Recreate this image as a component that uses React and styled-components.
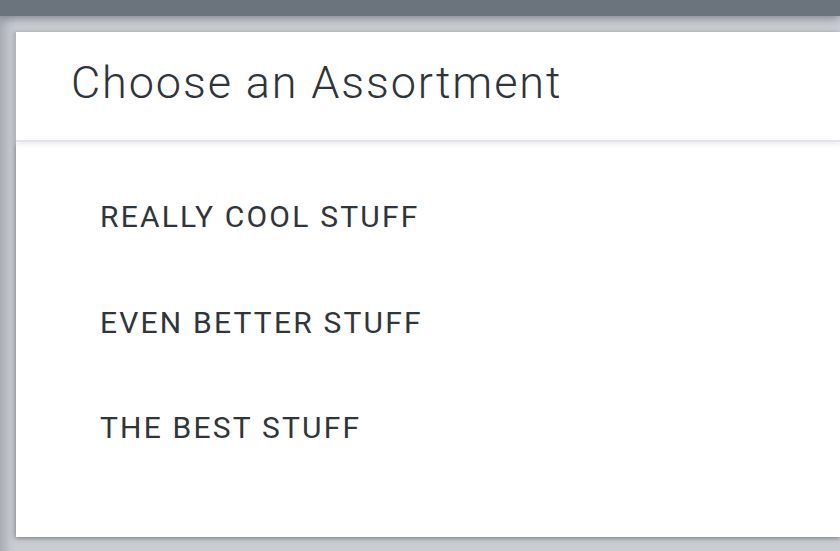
import React from "react";
import styled, { createGlobalStyle } from "styled-components";

const GlobalStyle = createGlobalStyle`
  html, body {
    margin: 0;
    padding: 0;
    height: 100%;
    overflow: hidden;
    background: #c9cdd2;
    font-family: Roboto, "Liberation Sans", sans-serif;
  }
`;

const TopBar = styled.header`
  height: 16px;
  background: #6b737c;
  position: relative;
  z-index: 2;
  box-shadow: 0 2px 10px rgba(60, 66, 74, 0.55);
`;

const Stage = styled.main`
  padding: 16px 0 0 16px;
  height: 535px;
  box-sizing: border-box;
  background: linear-gradient(to right, #a9aeb4 0, #c2c6cc 10px, #c9cdd2 16px);
`;

const Card = styled.section`
  background: #ffffff;
  height: 505px;
  box-shadow: 0 2px 4px rgba(80, 86, 94, 0.45), -2px 0 4px rgba(80, 86, 94, 0.25);
  display: flex;
  flex-direction: column;
`;

const CardHeader = styled.div`
  height: 110px;
  box-sizing: border-box;
  display: flex;
  align-items: center;
  padding: 0 0 8px 55px;
  border-bottom: 2px solid #e1e3e6;
  box-shadow: 0 3px 4px rgba(230, 233, 238, 0.7);
`;

const Title = styled.h2`
  margin: 0;
  font-size: 45px;
  font-weight: 300;
  color: #2e343a;
  letter-spacing: 1.9px;
`;

const List = styled.ul`
  list-style: none;
  margin: 0;
  padding: 22px 0 0 84px;
`;

const Item = styled.li`
  height: 105.5px;
  display: flex;
  align-items: center;
  font-size: 30px;
  font-weight: 400;
  letter-spacing: 2.2px;
  color: #2f353b;
  text-transform: uppercase;
`;

const assortments = ["Really Cool Stuff", "Even Better Stuff", "The Best Stuff"];

const App = () => {
  return (
    <>
      <GlobalStyle />
      <TopBar />
      <Stage>
        <Card>
          <CardHeader>
            <Title>Choose an Assortment</Title>
          </CardHeader>
          <List>
            {assortments.map((name) => (
              <Item key={name}>{name}</Item>
            ))}
          </List>
        </Card>
      </Stage>
    </>
  );
};

export default App;
